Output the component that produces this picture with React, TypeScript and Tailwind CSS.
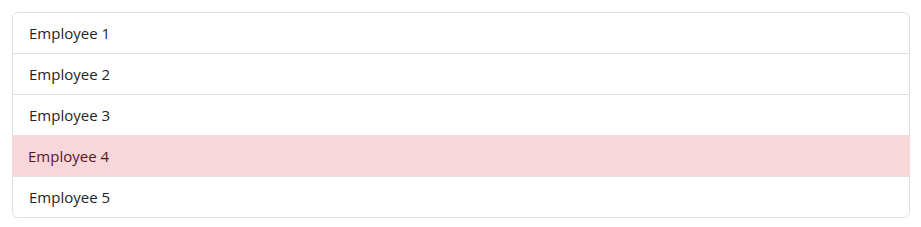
import React from 'react';

const employees = ['Employee 1', 'Employee 2', 'Employee 3', 'Employee 4', 'Employee 5'];

export default function App() {
  return (
    <div className="min-h-screen bg-white py-3 pl-3 pr-[11px]" style={{ fontFamily: '"Open Sans", "Noto Sans", sans-serif' }}>
      <ul className="rounded-md border border-[#dee2e6] text-[15px] text-[#212529]">
        {employees.map((name, i) => {
          const danger = i === 3;
          return (
            <li
              key={name}
              className={
                danger
                  ? '-mx-px border-t border-[#f8d7da] bg-[#f8d7da] px-4 py-2 leading-6 text-[#58151c]'
                  : `px-4 py-2 leading-6 ${i > 0 ? 'border-t border-[#dee2e6]' : ''}`
              }
            >
              {name}
            </li>
          );
        })}
      </ul>
    </div>
  );
}
